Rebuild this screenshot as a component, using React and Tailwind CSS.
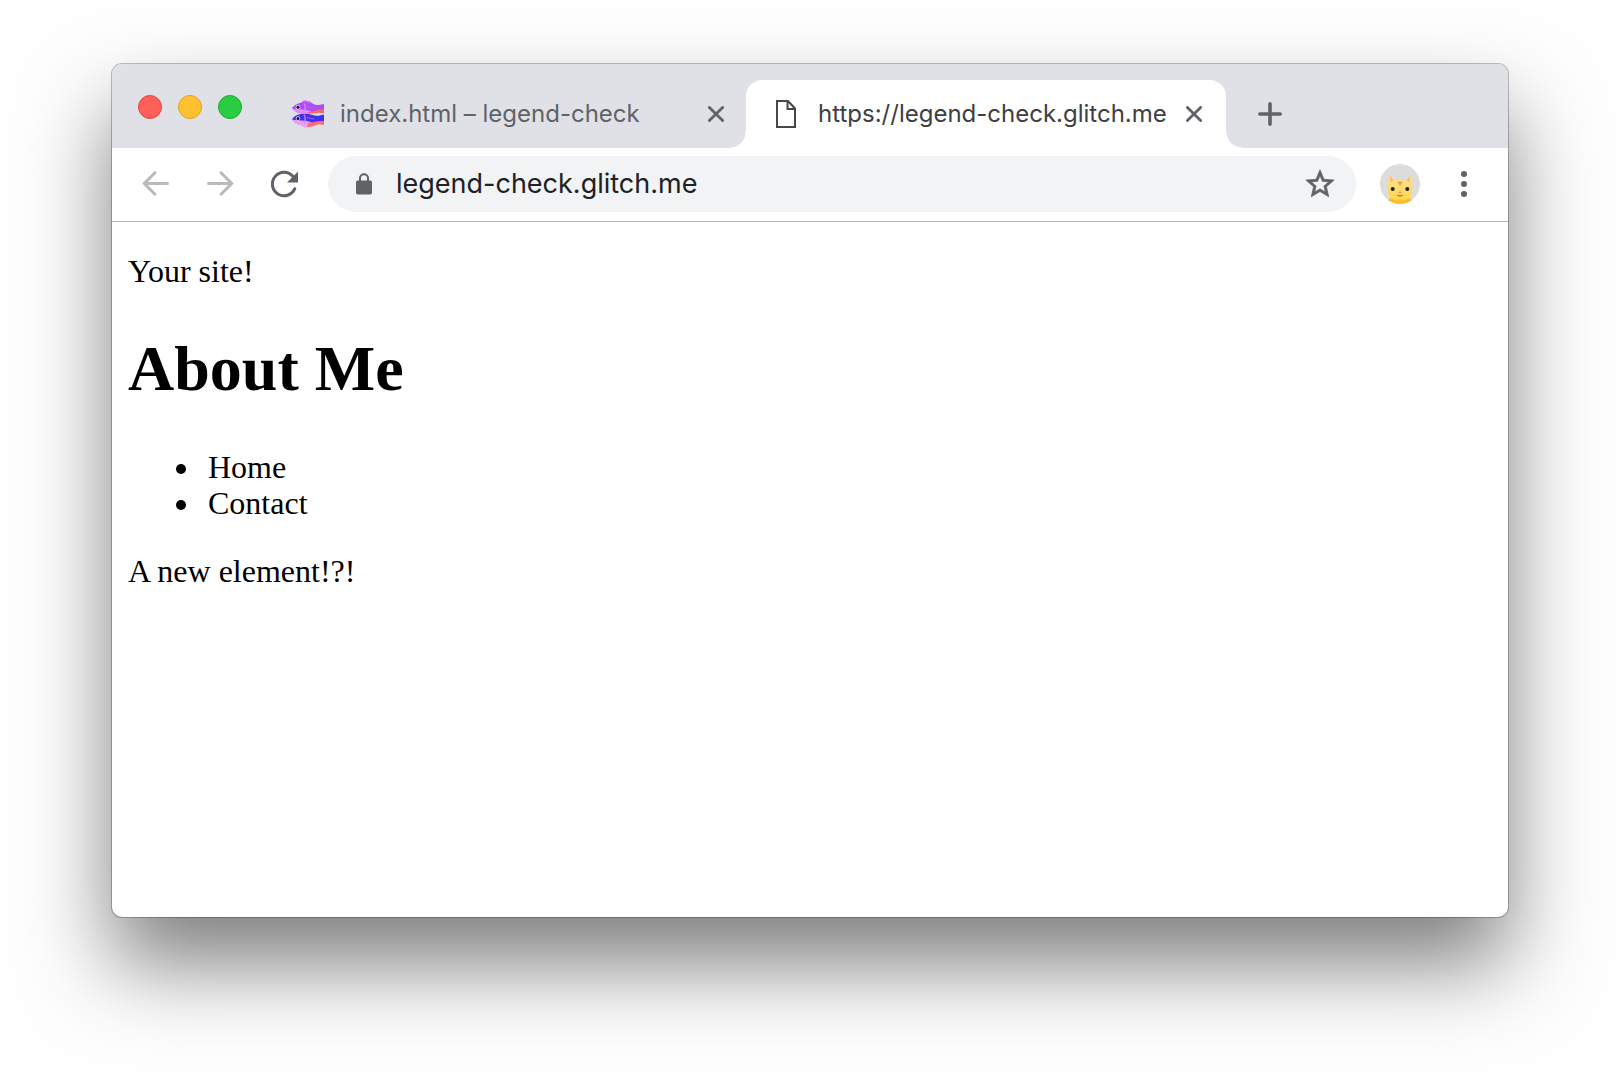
import React from "react";

function FishIcon() {
  return (
    <svg viewBox="0 0 32 32" className="size-8 shrink-0" aria-hidden="true">
      <path d="M8 5.500 12 2.200l6 1.300 5 3.500z" fill="#cf62f3" />
      <path d="M0 10C2.500 6.500 7 4.500 13 4.500c6 0 9 2.600 13.500 2.600L32 6v6L20 14H7C3.500 13.500 1 12 0 10z" fill="#ae4df8" />
      <path d="M.3 10.400C4 11.500 8 10.500 15 12l5 1.800c-3 1.200-6 1.800-9 1.800-5 0-9-2-10.700-5.200z" fill="#dd8df8" />
      <path d="M15.500 14.300c5-.3 8-2.300 11.500-2.600l5-.5v4c-2 .2-4-.6-6-.3-4 .5-6.500 1-10.500.8z" fill="#fd6865" />
      <path d="M0 21.300c2.500-4.200 7-5.600 13-5.600 6 0 9 2.300 13.500 2.100l5.500-1.200v6.500L20 25H7c-3.500-.5-6-1.800-7-3.700z" fill="#452ef3" />
      <path d="M.3 21.600c3.700 1 7.700.6 14.700 1.500l5 1.300-3 4.400-4 1-4-2.300C4.500 27 1.500 25 .3 21.600z" fill="#eaa0f5" />
      <path d="M15.500 25.300c5-.3 8-2.100 11.500-2.300l5 .1v3.900l-5-.7-7 2.200-4.500.7z" fill="#fd6a72" />
      <path d="M12 5.500c1.600 2.600 1.600 5.600.2 8.200M12 16.700c1.600 2.600 1.600 5.600.2 8.200" fill="none" stroke="#d58bfa" strokeWidth="1.300" />
      <path d="M15 8.500l6 1.800M15 19.500l7 1.600" fill="none" stroke="#9d6dfb" strokeWidth="1" />
      <circle cx="6" cy="9.300" r="2.300" fill="#d9d3e8" />
      <circle cx="6" cy="9.300" r="1.500" fill="#17121f" />
      <circle cx="6" cy="20.500" r="2.300" fill="#d9d3e8" />
      <circle cx="6" cy="20.500" r="1.500" fill="#17121f" />
    </svg>
  );
}

function PageIcon() {
  return (
    <svg viewBox="0 0 32 32" className="size-8 shrink-0" fill="none" stroke="#474747" strokeWidth="2" aria-hidden="true">
      <path d="M7 3h11l7 7.500V29H7z" />
      <path d="M17.500 3v8H25" />
    </svg>
  );
}

function CloseIcon() {
  return (
    <svg viewBox="0 0 16 16" className="size-4" fill="none" stroke="#5f6368" strokeWidth="2.800" strokeLinecap="round" aria-hidden="true">
      <path d="M1.400 1.400l13.200 13.200M14.600 1.400L1.400 14.600" />
    </svg>
  );
}

function ArrowIcon({ back }) {
  return (
    <svg viewBox="0 0 32 32" className="size-8" fill="none" stroke="#b9babb" strokeWidth="3" strokeLinecap="round" aria-hidden="true">
      <path d={back ? "M27.500 15.500H5.500M15 4.800L4.300 15.500 15 26.200" : "M4.500 15.500h22M17 4.800l10.700 10.700L17 26.200"} />
    </svg>
  );
}

function ReloadIcon() {
  return (
    <svg viewBox="0 0 32 32" className="size-8" aria-hidden="true">
      <path d="M26.800 20.700A11.700 11.700 0 1 1 25 8.500" fill="none" stroke="#5f6368" strokeWidth="3" strokeLinecap="round" />
      <path d="M30 3.500v11H19z" fill="#5f6368" />
    </svg>
  );
}

function LockIcon() {
  return (
    <svg viewBox="0 0 16 22" className="h-[22px] w-4 shrink-0" aria-hidden="true">
      <path d="M4 9V5.200a4 4 0 0 1 8 0V9" fill="none" stroke="#5f6368" strokeWidth="2" />
      <rect y="7.500" width="16" height="14" rx="1.700" fill="#5f6368" />
    </svg>
  );
}

function StarIcon() {
  return (
    <svg viewBox="0 0 24 24" className="size-[34px]" fill="#5f6368" stroke="#5f6368" strokeWidth="0.500" aria-hidden="true">
      <path d="M22 9.240l-7.190-.62L12 2 9.190 8.630 2 9.240l5.460 4.730L5.820 21 12 17.270 18.180 21l-1.630-7.030L22 9.240zM12 15.400l-3.760 2.270 1-4.280-3.320-2.880 4.380-.38L12 6.100l1.710 4.040 4.380.38-3.320 2.880 1 4.280L12 15.400z" />
    </svg>
  );
}

function CatAvatar() {
  return (
    <svg viewBox="0 0 40 40" className="size-10" aria-hidden="true">
      <defs>
        <clipPath id="avatar-clip"><circle cx="20" cy="20" r="20" /></clipPath>
        <linearGradient id="cat-fur" x1="0" y1="0" x2="0" y2="1">
          <stop offset="0" stopColor="#fcdf98" />
          <stop offset="1" stopColor="#fdd84c" />
        </linearGradient>
      </defs>
      <g clipPath="url(#avatar-clip)">
        <rect width="40" height="40" fill="#dcdcdc" />
        <path d="M7 40c0-3 1.500-5 4-6h18c2.500 1 4 3 4 6z" fill="#fdc832" />
        <path d="M10 11l4 5.200c4-1 8-1 12 0l4-5.200c2 3 2.500 8 2.500 14 0 7-4 11-12.500 11S7.500 32 7.500 25C7.500 19 8 14 10 11z" fill="url(#cat-fur)" />
        <path d="M10.300 12l3.200 4.500-3.700 1.800zM29.700 12l-3.200 4.500 3.700 1.800z" fill="#fbb976" />
        <path d="M17 17.300l3 4.700 3-4.700-1.700.7-1.300-.6-1.300.6z" fill="#e6a03c" />
        <path d="M9 35.500c6 3 16 3 22 0" fill="none" stroke="#f5b022" strokeWidth="1.500" strokeDasharray="2 1" />
        <circle cx="12.700" cy="25" r="2" fill="#1e2326" />
        <circle cx="27.300" cy="25" r="2" fill="#1e2326" />
        <path d="M18.300 27.700h3.400L20 29.600z" fill="#fb6d6d" />
        <path d="M17.500 31.200q2.500 1.200 5 0" fill="none" stroke="#9a6a2a" strokeWidth="1.200" />
      </g>
    </svg>
  );
}

function TrafficLights() {
  return (
    <div className="flex gap-4 self-start pt-[15px]">
      <button aria-label="Close window" className="size-6 rounded-full border border-[#e2463f] bg-[#ff6059]" />
      <button aria-label="Minimize window" className="size-6 rounded-full border border-[#e0a028] bg-[#ffc130]" />
      <button aria-label="Zoom window" className="size-6 rounded-full border border-[#1ea832] bg-[#28cd41]" />
    </div>
  );
}

const activeTab =
  "bg-white pr-6 pl-6 text-[#3c4043] before:absolute before:bottom-0 before:-left-4 before:size-4 before:bg-[radial-gradient(circle_at_0_0,transparent_15px,white_16px)] after:absolute after:bottom-0 after:-right-4 after:size-4 after:bg-[radial-gradient(circle_at_100%_0,transparent_15px,white_16px)]";
const idleTab = "pr-[22px] pl-[26px] text-[#5f6368]";

function Tab({ icon, title, active }) {
  return (
    <div
      className={
        "relative flex max-w-[480px] min-w-0 flex-1 items-center rounded-t-2xl " +
        (active ? activeTab : idleTab)
      }
    >
      <button role="tab" aria-selected={active} className="flex min-w-0 flex-1 items-center gap-4 text-left">
        {icon}
        <span className="truncate text-2xl">{title}</span>
      </button>
      <button aria-label={"Close " + title} className="shrink-0">
        <CloseIcon />
      </button>
    </div>
  );
}

export default function App() {
  return (
    <div className="flex min-h-screen flex-col bg-[#fefefe] px-28 pt-16 pb-[161px] font-['Inter',sans-serif]">
      <div className="flex flex-1 flex-col rounded-[10px] bg-white shadow-[0_0_0_1px_rgba(0,0,0,0.25),0_47px_86px_rgba(0,0,0,0.5)]">
        <header className="flex h-[84px] rounded-t-[10px] bg-[#dfe1e6] pt-4 pl-[26px]">
          <TrafficLights />
          <div role="tablist" className="ml-6 flex min-w-0 flex-1">
            <Tab icon={<FishIcon />} title="index.html – legend-check" active={false} />
            <Tab icon={<PageIcon />} title="https://legend-check.glitch.me" active={true} />
            <button aria-label="New tab" className="ml-8 shrink-0">
              <svg viewBox="0 0 24 24" className="size-6" fill="none" stroke="#5f6368" strokeWidth="3.600" strokeLinecap="round" aria-hidden="true">
                <path d="M12 1.800v20.400M1.800 12h20.400" />
              </svg>
            </button>
          </div>
        </header>

        <nav className="flex items-center border-b border-[#b5b5b7] px-7 pt-2 pb-[9px]">
          <div className="flex gap-8">
            <button aria-label="Back"><ArrowIcon back /></button>
            <button aria-label="Forward"><ArrowIcon /></button>
            <button aria-label="Reload"><ReloadIcon /></button>
          </div>
          <div className="ml-7 flex h-14 min-w-0 flex-1 items-center rounded-full bg-[#f1f3f4] pr-[19px] pl-7">
            <LockIcon />
            <input
              type="text"
              aria-label="Address"
              defaultValue="legend-check.glitch.me"
              className="ml-6 min-w-0 flex-1 bg-transparent text-[27px] text-[#202124] outline-none"
            />
            <button aria-label="Bookmark this page"><StarIcon /></button>
          </div>
          <button aria-label="Profile" className="ml-6"><CatAvatar /></button>
          <button aria-label="Menu" className="ml-7">
            <svg viewBox="0 0 32 32" className="size-8" fill="#5f6368" aria-hidden="true">
              <circle cx="16" cy="6" r="3" />
              <circle cx="16" cy="16" r="3" />
              <circle cx="16" cy="26" r="3" />
            </svg>
          </button>
        </nav>

        <main className="px-4 py-[31px] font-['Liberation_Serif',serif] text-[32px] leading-9 text-black">
          <p>Your site!</p>
          <h1 className="my-[43px] text-[64px] leading-[74px] font-bold">About Me</h1>
          <ul className="mb-8 list-disc pl-[74px]">
            <li className="pl-[6px]">Home</li>
            <li className="pl-[6px]">Contact</li>
          </ul>
          <p>A new element!?!</p>
        </main>
      </div>
    </div>
  );
}
